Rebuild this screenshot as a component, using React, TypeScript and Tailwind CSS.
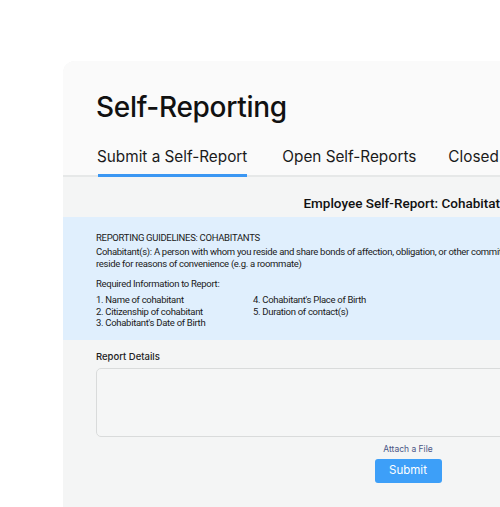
export default function App() {
  return (
    <div className="w-[500px] h-[507px] bg-white overflow-hidden relative">
      <div className="ml-[63px] mt-[61px] w-[690px] h-[500px] rounded-tl-[12px] bg-[#f4f5f5] overflow-hidden">
        {/* Header */}
        <div className="bg-[#fafafa] border-b-2 border-[#e6e8e8]">
          <h1 className="pl-[33px] pt-[28px] text-[28px] leading-[36px] font-medium tracking-[-0.3px] text-[#111] font-['Inter',sans-serif]">
            Self-Reporting
          </h1>
          <div className="flex pl-[34px] mt-[22px] font-['Inter',sans-serif] text-[15.3px] leading-[20px] text-[#1a1a1a]">
            <div className="relative pb-[8px]">
              Submit a Self-Report
              <div className="absolute left-[1px] right-0 -bottom-[2px] h-[3px] bg-[#3b97f3]" />
            </div>
            <div className="pb-[8px] ml-[35px]">Open Self-Reports</div>
            <div className="pb-[8px] ml-[32px]">Closed Self-Reports</div>
          </div>
        </div>

        {/* Body */}
        <div className="pt-[15px] font-['Roboto',sans-serif]">
          <div className="pl-[6px] text-center text-[13.5px] leading-[22px] font-medium text-[#111]">
            Employee Self-Report: Cohabitation
          </div>
          <div className="mt-[3px] bg-[#e0effd] pl-[33px] pr-[20px] pt-[15px] pb-[11px] text-[9.5px] leading-[12px] tracking-[-0.3px] text-[#1a1a1a]">
            <div>REPORTING GUIDELINES: COHABITANTS</div>
            <div className="mt-[2px] whitespace-nowrap">
              Cohabitant(s): A person with whom you reside and share bonds of affection, obligation, or other commitment, as opposed to a person with whom you
            </div>
            <div>reside for reasons of convenience (e.g. a roommate)</div>
            <div className="mt-[8px]">Required Information to Report:</div>
            <div className="mt-[4px] flex leading-[11.5px]">
              <div className="w-[157px]">
                <div>1. Name of cohabitant</div>
                <div>2. Citizenship of cohabitant</div>
                <div>3. Cohabitant's Date of Birth</div>
              </div>
              <div>
                <div>4. Cohabitant's Place of Birth</div>
                <div>5. Duration of contact(s)</div>
              </div>
            </div>
          </div>

          <div className="px-[33px] pt-[11px]">
            <div className="font-['Inter',sans-serif] text-[9.5px] leading-[12px] font-medium text-[#222]">Report Details</div>
            <div className="mt-[5px] h-[69px] rounded-[5px] border border-[#d9dbdb] bg-[#f5f6f6]" />
            <div className="flex flex-col items-center mt-[6px] font-['Inter',sans-serif]">
              <div className="text-[8.5px] leading-[12px] text-[#4a5585]">Attach a File</div>
              <button className="mt-[4px] w-[67px] h-[24px] rounded-[3px] bg-[#3d9ff8] text-white text-[11.5px]">
                Submit
              </button>
            </div>
          </div>
        </div>
      </div>
    </div>
  )
}
